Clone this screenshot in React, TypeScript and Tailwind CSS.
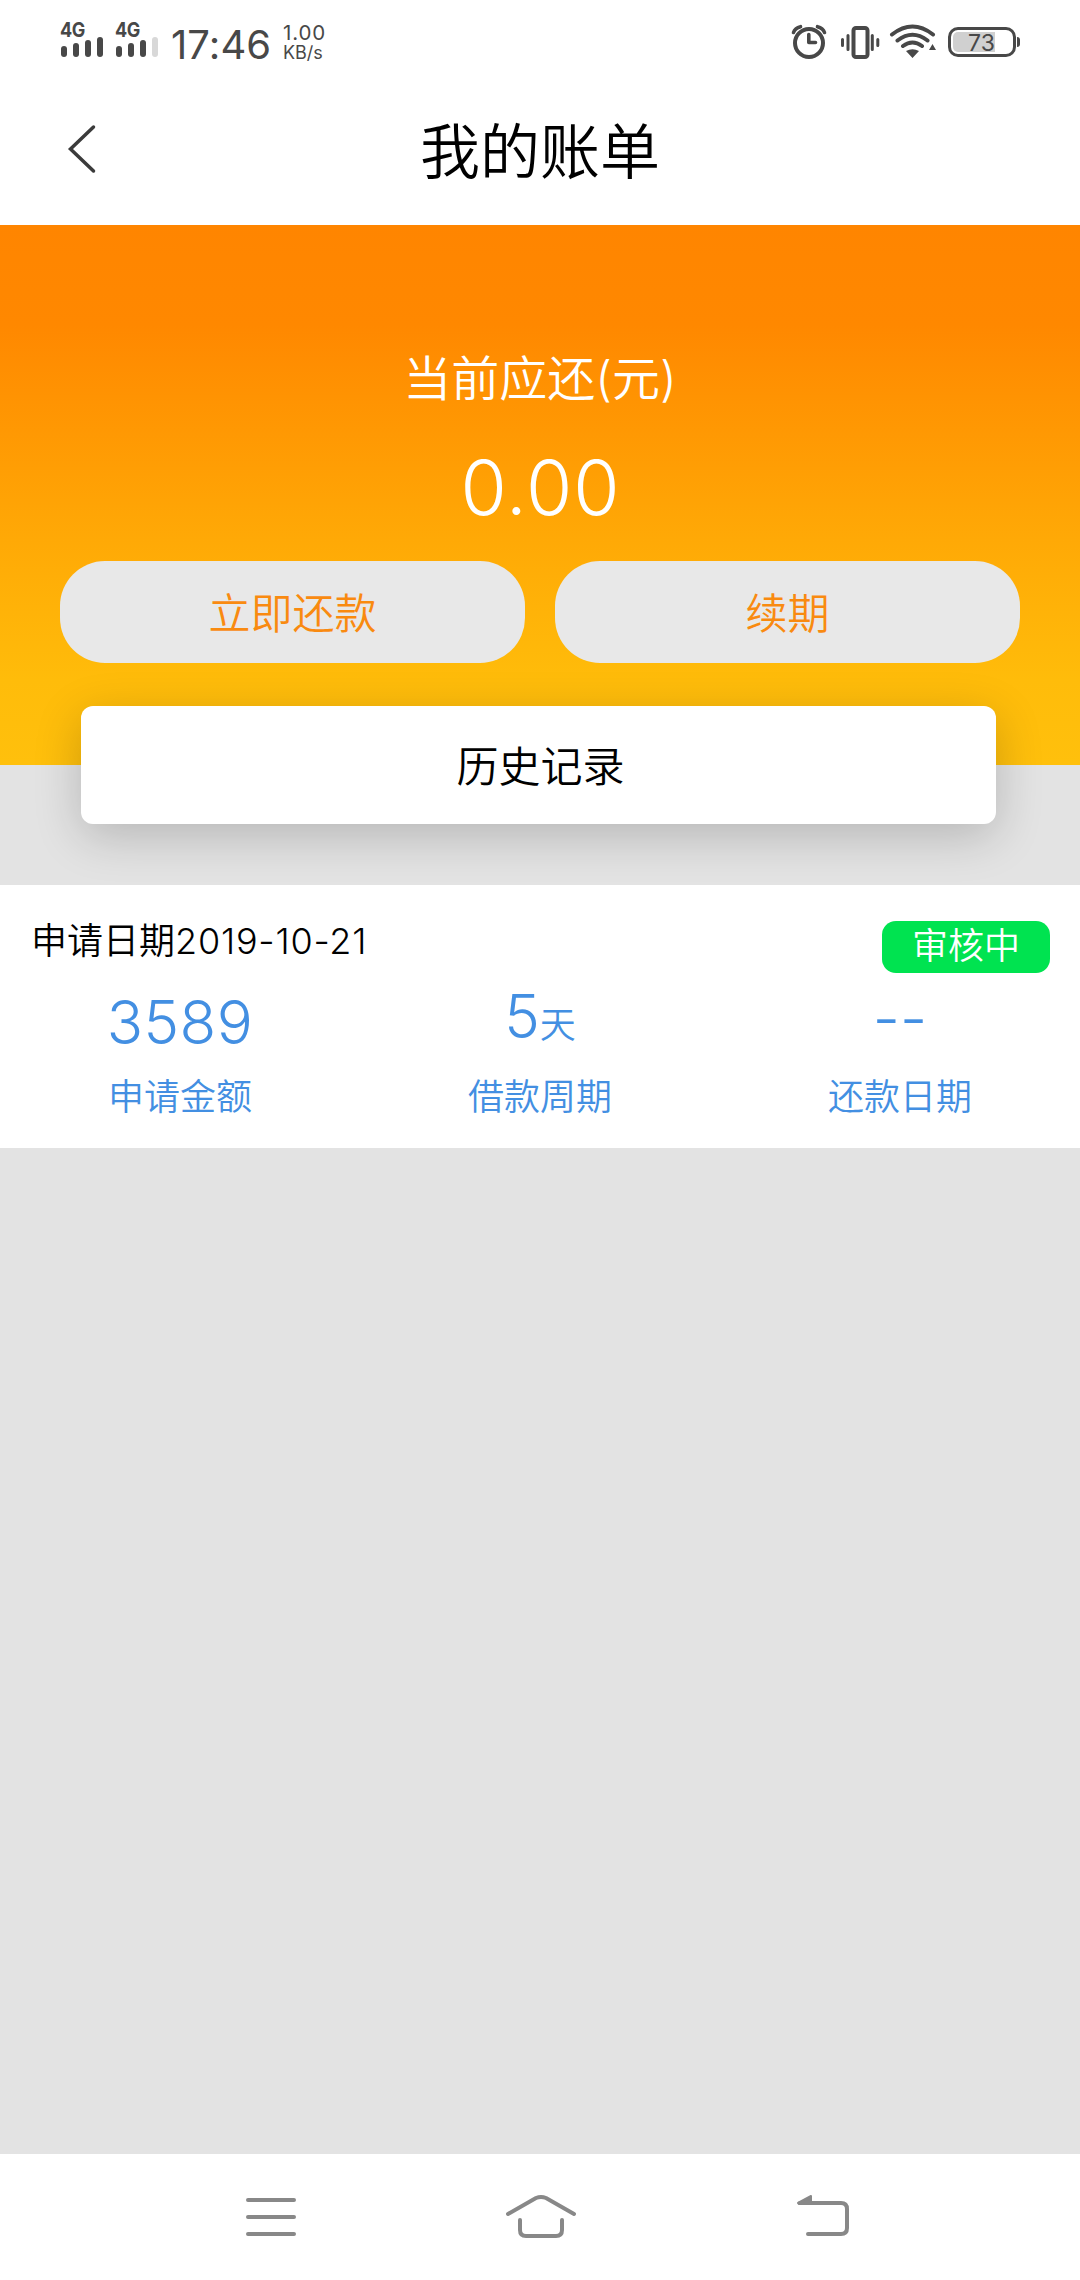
const Bars = ({ weak = false }: { weak?: boolean }) => (
  <div className="h-[36px] w-[43px]">
    <div className="h-[16px] origin-left scale-x-[0.88] text-[20.5px] leading-[18px] font-bold tracking-[-0.5px]">4G</div>
    <div className="flex h-[20px] items-end gap-[6px] pl-px">
      <i className="h-[11px] w-[6px] rounded-[3px] bg-[#484848]" />
      <i className="h-[14px] w-[6px] rounded-[3px] bg-[#484848]" />
      <i className="h-[17px] w-[6px] rounded-[3px] bg-[#484848]" />
      <i className={weak ? "h-[20px] w-[6px] rounded-[3px] bg-[#d8d8d8]" : "h-[20px] w-[6px] rounded-[3px] bg-[#484848]"} />
    </div>
  </div>
);

const StatusIcons = () => (
  <svg width="164" height="44" viewBox="788 20 164 44" fill="none" stroke="#484848">
    <circle cx="809" cy="43" r="14" strokeWidth="4" />
    <path d="M808.8 34.5V42.5H815.5" strokeWidth="3.6" strokeLinejoin="round" strokeLinecap="round" />
    <path d="M793.5 32.5Q795 28 800.5 26.7M824.500 32.500Q823 28 817.500 26.700" strokeWidth="3.6" strokeLinecap="round" />
    <rect x="853.5" y="28" width="14" height="29" rx="2.500" strokeWidth="4" />
    <path d="M842.500 39.500V45.500M848 35.500V49.500M872.300 35.500V49.500M877.800 39.500V45.500" strokeWidth="3" strokeLinecap="round" />
    <path d="M892 34.500Q912.500 18.500 933 34.500M897.500 40.500Q912.500 29 927.500 40.500M903 46Q912.500 39 922 46" strokeWidth="4" strokeLinecap="round" />
    <path d="M906 51Q912.500 47.500 919 51L912.500 58ZM929 50L932.500 44L936 50Z" fill="#484848" stroke="none" />
  </svg>
);

const Battery = () => (
  <div className="relative flex h-[30px] w-[68px] items-center rounded-[10px] border-[3px] border-[#484848] p-[2px]">
    <div className="h-full w-[42px] rounded-l-[5px] bg-[#d0d0d0]" />
    <span className="absolute top-[3px] left-[17px] text-[23px] leading-[20px]">73</span>
    <i className="absolute top-[7px] -right-[7px] h-[10px] w-[3px] rounded-r-[3px] bg-[#484848]" />
  </div>
);

const stats = [
  { value: "3589", unit: "", label: "申请金额", line: "h-[80px] text-[60px] leading-[58px] tracking-[0.4px]" },
  { value: "5", unit: "天", label: "借款周期", line: "h-[80px] text-[60px] leading-[46px]" },
  { value: "--", unit: "", label: "还款日期", line: "h-[80px] text-[60px] leading-[50px]" },
];

export default function App() {
  return (
    <div className="flex h-[2280px] w-[1080px] flex-col bg-[#e3e3e3] font-['Inter','Noto_Sans_CJK_SC',sans-serif] font-[350] text-black">
      <div className="flex h-[84px] shrink-0 items-start bg-white pl-[60px] font-normal text-[#484848]">
        <div className="flex gap-[12px] pt-[21px]">
          <Bars />
          <Bars weak />
        </div>
        <div className="ml-[13px] w-[98px] pt-[24px] text-[40px] leading-[42px] tracking-[0.1px] whitespace-nowrap">17:46</div>
        <div className="ml-[14px] pt-[23px] text-[20.5px] leading-[20px]">
          <div className="tracking-[0.9px]">1.00</div>
          <div className="text-[18px]">KB/s</div>
        </div>
        <div className="ml-auto flex pt-[20px] pr-[64px]">
          <StatusIcons />
          <div className="-ml-[4px] pt-[7px]"><Battery /></div>
        </div>
      </div>

      <header className="grid h-[141px] shrink-0 grid-cols-3 items-center bg-white pb-[10px]">
        <svg className="ml-[66px]" width="32" height="52" viewBox="0 0 32 52" fill="none" stroke="#3b3b3b" strokeWidth="3.500" strokeLinecap="round">
          <path d="M27.500 3L4.500 25L27.500 47" />
        </svg>
        <h1 className="pt-[4px] text-center text-[60px] leading-[80px]">我的账单</h1>
      </header>

      <main className="flex flex-1 flex-col">
        <section className="h-[540px] bg-[linear-gradient(180deg,#ff8500_0px,#ff8800_100px,#ffa906_315px,#ffbc0a_455px,#ffc00c_540px)] pt-[123px]">
          <div className="pt-px text-center text-[48px] leading-[60px] text-white">当前应还(元)</div>
          <div className="mt-[37px] pl-px text-center text-[75px] leading-[84px] font-light tracking-[0.9px] text-white">0.00</div>
          <div className="mt-[31px] flex gap-[30px] px-[60px] text-[42px] text-[#f98a10]">
            <button className="h-[102px] flex-1 rounded-[45px] bg-[#e8e8e8] pt-[2px]">立即还款</button>
            <button className="h-[102px] flex-1 rounded-[45px] bg-[#e8e8e8] pt-[2px]">续期</button>
          </div>
          <button className="relative mt-[43px] ml-[81px] block h-[118px] w-[915px] rounded-[12px] bg-white pt-[3px] pl-[4px] text-[42px] shadow-[0_12px_48px_rgba(0,0,0,0.2)]">
            历史记录
          </button>
        </section>

        <section className="relative mt-[120px] h-[263px] bg-white">
          <div className="flex h-[108px] items-start justify-between pr-[30px] pl-[31px] text-[36px]">
            <div className="pt-[33px] leading-[46px]">申请日期<span className="tracking-[0.8px]">2019-10-21</span></div>
            <span className="mt-[36px] h-[52px] w-[168px] rounded-[14px] bg-[#00e350] text-center leading-[50px] text-white">审核中</span>
          </div>
          <div className="grid grid-cols-3 text-center text-[#438fe2]">
            {stats.map((s) => (
              <div key={s.label}>
                <div className={s.line}>
                  {s.value}
                  <span className="text-[36px]">{s.unit}</span>
                </div>
                <div className="pt-px text-[36px] leading-[46px]">{s.label}</div>
              </div>
            ))}
          </div>
        </section>
      </main>

      <nav className="grid h-[126px] shrink-0 grid-cols-[540px_2px_538px] items-center bg-white">
        <svg className="ml-[240px]" width="62" height="60" viewBox="240 2187 62 60" fill="none" stroke="#888888" strokeWidth="4" strokeLinecap="round">
          <path d="M248 2200H294M248 2217H294M248 2234H294" />
        </svg>
        <svg className="-ml-[40px] max-w-none" width="80" height="60" viewBox="500 2187 80 60" fill="none" stroke="#888888" strokeWidth="4" strokeLinecap="round" strokeLinejoin="round">
          <path d="M508 2214L536 2198Q541 2196 546 2198L574 2214M520 2220V2230Q520 2236 526 2236H556Q562 2236 562 2230V2220" />
        </svg>
        <svg className="ml-[248px]" width="70" height="60" viewBox="790 2187 70 60" fill="none" stroke="#888888" strokeWidth="4" strokeLinecap="round">
          <path d="M800 2203H841Q847 2203 847 2209V2228Q847 2234 841 2234H808" />
          <path d="M798 2203L811 2196V2204H799Z" fill="#888888" strokeWidth="2" strokeLinejoin="round" />
        </svg>
      </nav>
    </div>
  );
}
